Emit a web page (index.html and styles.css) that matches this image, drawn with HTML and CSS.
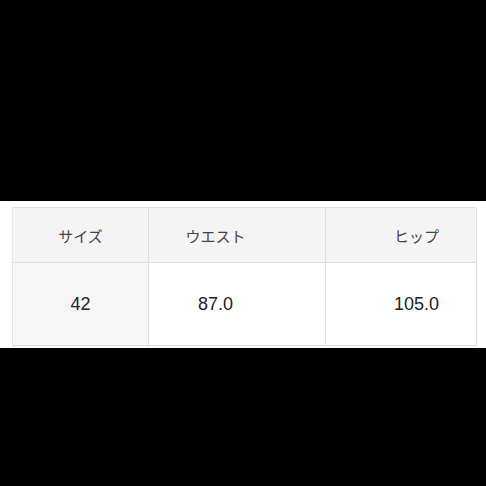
FILE: index.html
```html
<!DOCTYPE html>
<html lang="ja">
<head>
<meta charset="utf-8">
<link rel="stylesheet" href="styles.css">
</head>
<body>
<div class="top"></div>
<section class="sheet">
  <div class="size-table">
    <div class="cell head c1">サイズ</div>
    <div class="cell head c2">ウエスト</div>
    <div class="cell head c3">ヒップ</div>
    <div class="cell data c1 label">42</div>
    <div class="cell data c2">87.0</div>
    <div class="cell data c3">105.0</div>
  </div>
</section>
</body>
</html>
```
FILE: styles.css
```css
html, body {
  margin: 0;
  padding: 0;
  background: #000;
  height: 100%;
}
body {
  font-family: "Liberation Sans", "Noto Sans CJK JP", sans-serif;
  color: #333;
}
.top {
  height: 201px;
}
.sheet {
  background: #fff;
  padding: 6px 10px 2px 12px;
}
.size-table {
  display: grid;
  grid-template-columns: 136px 177px 151px;
  grid-template-rows: 55px 83px;
  border-top: 1px solid #e2e2e2;
  border-left: 1px solid #e6e6e6;
}
.cell {
  display: flex;
  align-items: center;
  justify-content: center;
  border-right: 1px solid #e0e0e0;
  border-bottom: 1px solid #dedede;
}
.head {
  background: #f4f4f4;
  font-size: 15px;
  color: #444;
}
.data {
  background: #fff;
  font-size: 18px;
  color: #222;
}
.data.label {
  background: #f6f6f6;
}
.c2 {
  padding-right: 43px;
}
.c3 {
  padding-left: 31px;
}
```
